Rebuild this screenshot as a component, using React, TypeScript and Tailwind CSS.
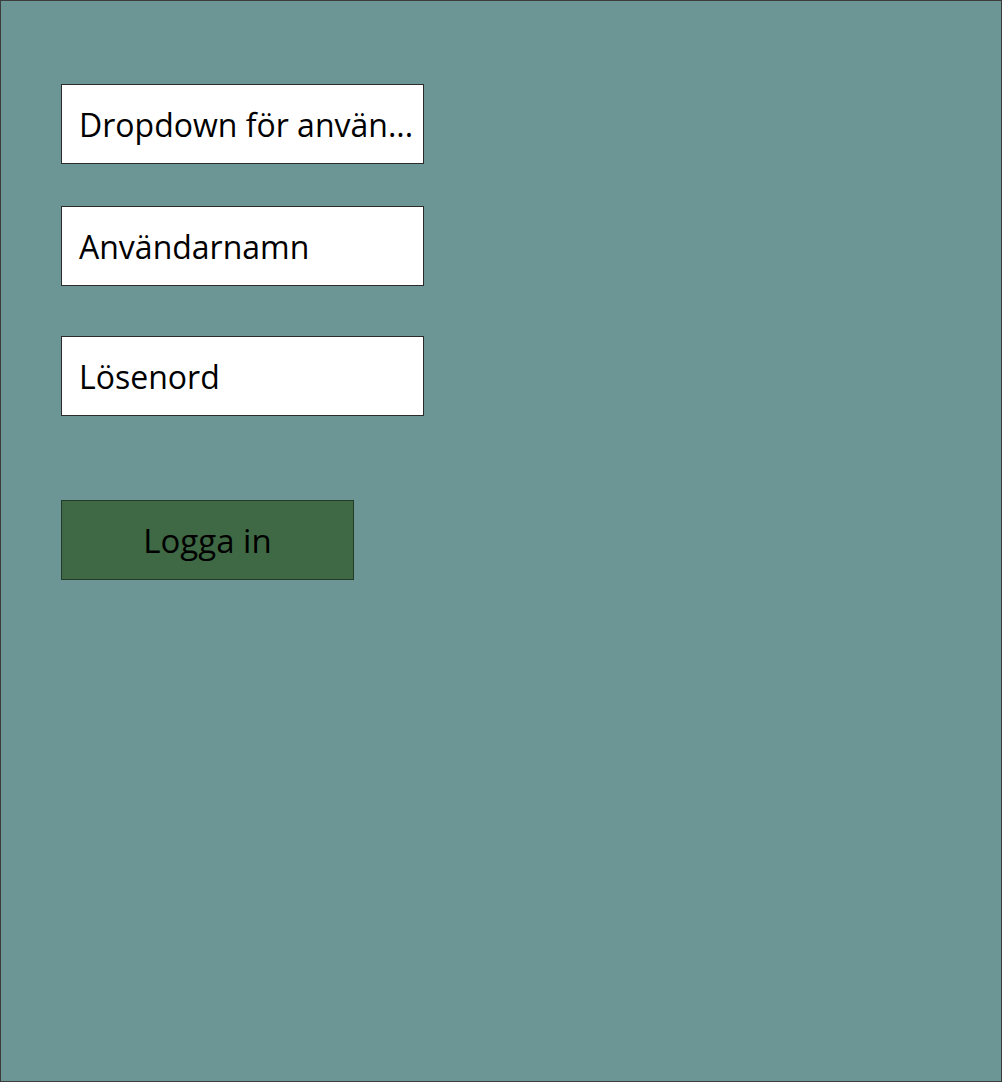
import React from 'react';

const fieldClass =
  "flex items-center w-[363px] h-[80px] pl-[17px] pt-[2px] bg-white border border-[#2b2b2b] text-black text-[32px] whitespace-nowrap overflow-hidden";

const App: React.FC = () => {
  return (
    <div
      className="w-[1002px] h-[1082px] bg-[#6c9596] border border-[#3c3c3c] pl-[60px] pt-[83px] flex flex-col items-start"
      style={{ fontFamily: '"Open Sans", "Noto Sans", sans-serif' }}
    >
      <div className={fieldClass}>Dropdown för använ...</div>
      <div className={`${fieldClass} mt-[42px]`}>Användarnamn</div>
      <div className={`${fieldClass} mt-[50px]`}>Lösenord</div>
      <button className="mt-[84px] w-[293px] h-[80px] pt-[2px] bg-[#3e6944] border border-[#263a2a] text-black text-[33px] flex items-center justify-center">
        Logga in
      </button>
    </div>
  );
};

export default App;
